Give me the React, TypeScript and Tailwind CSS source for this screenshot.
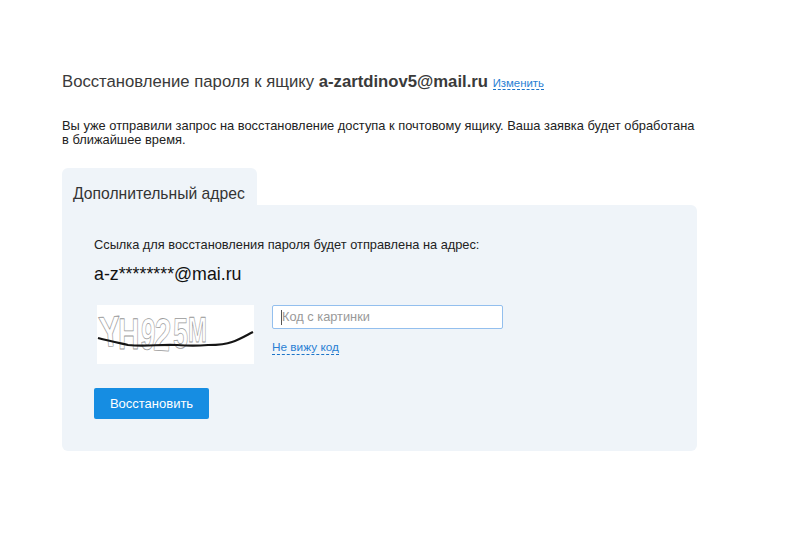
const captcha = [
  { c: "Y", x: 3, y: 42, size: 43, sx: 0.76, rot: -4 },
  { c: "H", x: 21, y: 44, size: 44, sx: 0.68, rot: 0 },
  { c: "9", x: 43, y: 44, size: 44, sx: 0.6, rot: 3 },
  { c: "2", x: 56, y: 45, size: 46, sx: 0.66, rot: 4 },
  { c: "5", x: 76, y: 43, size: 43, sx: 0.63, rot: 0 },
  { c: "M", x: 91, y: 37, size: 36, sx: 0.63, rot: 0 },
];

export default function App() {
  return (
    <div className="min-h-[548px] bg-white font-['Liberation_Sans',Arial,sans-serif] text-[#333]">
      <div className="ml-[62px] w-[635px] pt-[71px]">
        <h1 className="text-[16.7px] leading-[22px] text-[#3a3a3a]">
          Восстановление пароля к ящику <b className="font-bold">a-zartdinov5@mail.ru</b>{" "}
          <a className="border-b border-dashed border-[#1a73c8] text-[11.4px] leading-[14px] text-[#2a7fd4]">Изменить</a>
        </h1>

        <p className="mt-[26px] w-[635px] text-[12.86px] leading-[14px] text-[#222]">
          Вы уже отправили запрос на восстановление доступа к почтовому ящику. Ваша заявка будет обработана в ближайшее время.
        </p>

        {/* таб */}
        <div className="mt-[21px] h-[37px] w-[195px] rounded-t-md bg-[#eff4f9] pl-[11px] pt-[16px] text-[15.7px] leading-[20px] text-[#333]">
          Дополнительный адрес
        </div>

        {/* панель */}
        <div className="h-[246px] rounded-b-md rounded-tr-md bg-[#eff4f9] pl-[32px] pt-[32px]">
          <div className="text-[12.8px] leading-[15px] text-[#222]">
            Ссылка для восстановления пароля будет отправлена на адрес:
          </div>
          <div className="mt-[11px] text-[17.8px] leading-[22px] text-[#111]">a-z********@mai.ru</div>

          <div className="mt-[20px] flex items-start">
            <svg width="157" height="59" viewBox="0 0 157 59" className="ml-[3px] bg-white">
              {captcha.map((l, i) => (
                <text
                  key={i}
                  transform={`translate(${l.x} ${l.y}) rotate(${l.rot}) scale(${l.sx} 1)`}
                  fontFamily="Liberation Sans"
                  fontWeight="bold"
                  fontSize={l.size}
                  fill="white"
                  stroke="#999"
                  strokeWidth="0.8"
                  strokeLinejoin="round"
                  textRendering="geometricPrecision"
                >
                  {l.c}
                </text>
              ))}
              <path
                d="M1 33 C12 36 22 38 31 40 C50 42 62 39 80 40 C92 41 100 41 111 40 C122 40 130 39 135 37 C142 35 150 30 156 27"
                fill="none"
                stroke="#151515"
                strokeWidth="2.2"
              />
            </svg>

            <div className="ml-[18px]">
              <div className="flex h-[24px] w-[231px] items-center rounded-[2px] border border-[#93bfee] bg-white pl-[8px] text-[12.8px] text-[#999]">
                <span className="h-[15px] w-px bg-[#555]" />
                Код с картинки
              </div>
              <a className="mt-[11px] inline-block border-b border-dashed border-[#1a73c8] text-[11.8px] leading-[14px] text-[#2a7fd4]">
                Не вижу код
              </a>
            </div>
          </div>

          <button className="mt-[24px] h-[31px] w-[115px] rounded-[2px] bg-[#168de2] text-[13px] text-white">
            Восстановить
          </button>
        </div>
      </div>
    </div>
  );
}
